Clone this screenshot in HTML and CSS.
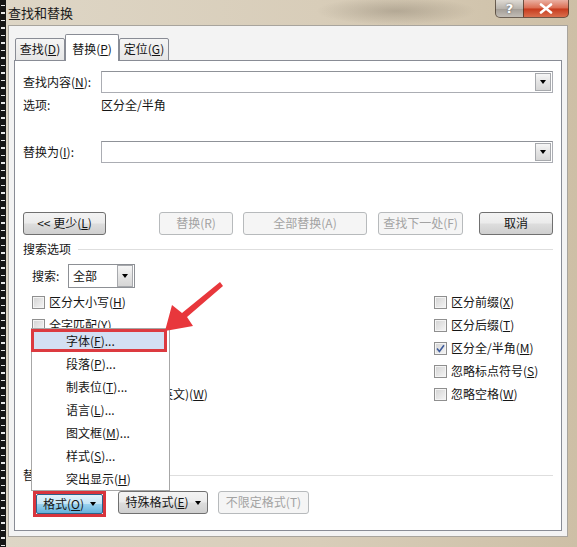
FILE: index.html
```html
<!DOCTYPE html>
<html lang="zh-CN">
<head>
<meta charset="utf-8">
<title>查找和替换</title>
<link rel="stylesheet" href="styles.css">
</head>
<body>
<div class="screen">
  <div class="strip"></div>
  <div class="window">
    <div class="titlebar">
      <span class="title">查找和替换</span>
      <div class="caption">
        <span class="cap help">?</span>
        <span class="cap close">
          <svg width="14" height="11" viewBox="0 0 14 11"><path d="M2 1.5 L12 9.5 M12 1.5 L2 9.5" stroke="#fff" stroke-width="2.6" stroke-linecap="round"/></svg>
        </span>
      </div>
    </div>
    <div class="client">
      <div class="tabs">
        <span class="tab">查找(<u>D</u>)</span>
        <span class="tab active">替换(<u>P</u>)</span>
        <span class="tab">定位(<u>G</u>)</span>
      </div>
      <div class="panel">
        <div class="field">
          <span class="field-label">查找内容(<u>N</u>):</span>
          <div class="combo"><span class="drop"><i class="tri"></i></span></div>
        </div>
        <div class="field options">
          <span class="field-label">选项:</span>
          <span>区分全/半角</span>
        </div>
        <div class="field replace">
          <span class="field-label">替换为(<u>I</u>):</span>
          <div class="combo"><span class="drop"><i class="tri"></i></span></div>
        </div>
        <div class="actions">
          <button class="btn w-less">&lt;&lt; 更少(<u>L</u>)</button>
          <button class="btn disabled w-replace">替换(R)</button>
          <button class="btn disabled w-all">全部替换(A)</button>
          <button class="btn disabled w-next">查找下一处(F)</button>
          <button class="btn w-cancel">取消</button>
        </div>
        <div class="group-head"><span>搜索选项</span><i class="rule"></i></div>
        <div class="search-row">
          <span class="search-label">搜索:</span>
          <div class="select"><span class="select-value">全部</span><span class="drop"><i class="tri"></i></span></div>
        </div>
        <div class="checks">
          <label class="check"><span class="box"></span>区分大小写(<u>H</u>)</label>
          <label class="check"><span class="box"></span>区分前缀(<u>X</u>)</label>
          <label class="check"><span class="box"></span>全字匹配(<u>Y</u>)</label>
          <label class="check"><span class="box"></span>区分后缀(<u>T</u>)</label>
          <label class="check"><span class="box"></span>使用通配符(<u>U</u>)</label>
          <label class="check"><span class="box checked"><svg width="9" height="9" viewBox="0 0 9 9"><path d="M1 4.6 L3.4 7.4 L8 1.2" fill="none" stroke="#3d5a9a" stroke-width="1.6"/></svg></span>区分全/半角(<u>M</u>)</label>
          <label class="check"><span class="box"></span>同音(英文)(<u>K</u>)</label>
          <label class="check"><span class="box"></span>忽略标点符号(<u>S</u>)</label>
          <label class="check"><span class="box"></span>查找单词的所有形式(英文)(<u>W</u>)</label>
          <label class="check"><span class="box"></span>忽略空格(<u>W</u>)</label>
        </div>
        <div class="group-head bottom"><span>替换</span><i class="rule"></i></div>
        <div class="format-row">
          <span class="pressed-wrap"><button class="btn pressed">格式(<u>O</u>)<i class="caret"></i></button></span>
          <button class="btn w-special">特殊格式(<u>E</u>)<i class="caret"></i></button>
          <button class="btn disabled w-nofmt">不限定格式(T)</button>
        </div>
      </div>
    </div>
  </div>

  <div class="menu">
    <div class="menu-item hot">字体(<u>F</u>)...</div>
    <div class="menu-item">段落(<u>P</u>)...</div>
    <div class="menu-item">制表位(<u>T</u>)...</div>
    <div class="menu-item">语言(<u>L</u>)...</div>
    <div class="menu-item">图文框(<u>M</u>)...</div>
    <div class="menu-item">样式(<u>S</u>)...</div>
    <div class="menu-item">突出显示(<u>H</u>)</div>
  </div>

  <svg class="pointer" width="577" height="547" viewBox="0 0 577 547">
    <polygon points="165,331 172,305 182,313 220,282 223,286 187,317 193,326" fill="#e8373c"/>
  </svg>
</div>
</body>
</html>
```

FILE: styles.css
```css
* { box-sizing: border-box; }

html, body {
  margin: 0;
  padding: 0;
}

body {
  width: 577px;
  height: 547px;
  overflow: hidden;
  font: 12px/1.2 "Noto Sans CJK SC", "Microsoft YaHei", sans-serif;
  color: #151515;
  background: #d3c7b1;
}

u { text-underline-offset: 1px; }

.screen {
  position: relative;
  display: flex;
  height: 547px;
}

/* dark film edge on the left */
.strip {
  flex: none;
  width: 6px;
  background-color: #161616;
  background-image: repeating-linear-gradient(to bottom, transparent 0 5px, #e6e6e6 5px 6.5px, transparent 6.5px 7.5px);
  background-size: 4px 100%;
  background-position: 1px 0;
  background-repeat: no-repeat;
}

/* window frame */
.window {
  flex: 1;
  display: flex;
  flex-direction: column;
  background:
    radial-gradient(ellipse 80px 14px at 390px 11px, rgba(110, 100, 85, 0.32), transparent),
    linear-gradient(90deg, #ded6c6, #d8cdb9 55%, #cdbfa6);
}

.titlebar {
  flex: none;
  height: 25px;
  display: flex;
  justify-content: space-between;
  align-items: flex-start;
  padding: 0 8px 0 2px;
}

.title {
  font-size: 13px;
  line-height: 25px;
  color: #1a1a1a;
}

.caption { display: flex; }

.cap {
  height: 18px;
  display: flex;
  align-items: center;
  justify-content: center;
  color: #fff;
  font: bold 13px "DejaVu Sans", sans-serif;
  border: 1px solid rgba(70, 55, 40, 0.75);
  border-top: none;
}

.help {
  width: 28px;
  border-right: none;
  border-radius: 0 0 0 5px;
  background: linear-gradient(#dedad3, #b9b4ad 50%, #a29c95 51%, #c2bdb6);
  text-shadow: 0 0 2px #555;
}

.close {
  width: 46px;
  border-radius: 0 0 5px 0;
  background: linear-gradient(#eab0a2, #db6c51 48%, #c63a1d 52%, #da6e4d);
}

.client {
  flex: 1;
  display: flex;
  flex-direction: column;
  margin: 0 9px 10px 2px;
  padding: 8px 5px 5px 5px;
  background: #f3f3f3;
  border: 1px solid #a8a49d;
}

/* tabs */
.tabs {
  display: flex;
  align-items: flex-end;
  height: 27px;
  margin-bottom: -1px;
  padding-left: 1px;
  position: relative;
  z-index: 1;
}

.tab {
  width: 50px;
  height: 23px;
  display: flex;
  align-items: center;
  justify-content: center;
  padding-bottom: 1px;
  border: 1px solid #898c95;
  border-radius: 2px 2px 0 0;
  background: linear-gradient(#f5f5f5, #e6e6e6);
}

.tab.active {
  width: 54px;
  height: 27px;
  padding-top: 3px;
  border-bottom: none;
  background: #fff;
}

.panel {
  flex: 1;
  display: flex;
  flex-direction: column;
  padding: 10px 8px 0 8px;
  background: #fff;
  border: 1px solid #898c95;
}

.field {
  display: flex;
  align-items: center;
  height: 22px;
}

.field.options { margin-top: 1px; }
.field.replace { margin-top: 25px; }

.field-label {
  flex: none;
  width: 78px;
}

.combo {
  flex: 1;
  height: 22px;
  display: flex;
  justify-content: flex-end;
  align-items: center;
  padding-right: 1px;
  background: #fff;
  border: 1px solid #abadb3;
  border-top-color: #8f9298;
}

.drop {
  width: 16px;
  height: 18px;
  display: flex;
  align-items: center;
  justify-content: center;
  border: 1px solid #a7a9ad;
  background: linear-gradient(#f6f6f6, #e4e4e4 50%, #d6d6d6);
}

.tri {
  width: 0;
  height: 0;
  border-left: 3.5px solid transparent;
  border-right: 3.5px solid transparent;
  border-top: 4px solid #000;
}

/* buttons */
.btn {
  font: inherit;
  color: #151515;
  height: 23px;
  padding: 0;
  display: inline-flex;
  align-items: center;
  justify-content: center;
  border: 1px solid #707070;
  border-radius: 3px;
  background: linear-gradient(#f3f3f3, #ebebeb 48%, #dddddd 52%, #cfcfcf);
}

.btn.disabled {
  color: #a3a3a3;
  border-color: #b7babc;
  background: #f5f5f5;
}

.actions {
  display: flex;
  margin-top: 49px;
}

.w-less { width: 83px; }
.w-replace { width: 74px; margin-left: 53px; }
.w-all { width: 124px; margin-left: 10px; }
.w-next { width: 85px; margin-left: 11px; }
.w-cancel { width: 74px; margin-left: 16px; }

.group-head {
  display: flex;
  align-items: center;
  height: 16px;
  margin-top: 6px;
}

.group-head.bottom { margin-top: 61px; }

.rule {
  flex: 1;
  height: 1px;
  margin-left: 7px;
  background: #dedede;
}

.search-row {
  display: flex;
  align-items: center;
  height: 24px;
  margin-top: 7px;
  padding-left: 9px;
}

.search-label { width: 36px; }

.select {
  width: 67px;
  height: 24px;
  display: flex;
  align-items: center;
  justify-content: space-between;
  padding: 0 1px 0 4px;
  border: 1px solid #8d9095;
  background: #fff;
}

.select .drop { height: 22px; }

/* check boxes, two columns */
.checks {
  display: grid;
  grid-template-columns: 402px 1fr;
  grid-auto-rows: 23px;
  margin-top: 3px;
  padding-left: 9px;
}

.check {
  display: flex;
  align-items: center;
  white-space: nowrap;
}

.box {
  flex: none;
  width: 13px;
  height: 13px;
  margin-right: 4px;
  display: flex;
  align-items: center;
  justify-content: center;
  border: 1px solid #8f8f8f;
  background: linear-gradient(135deg, #d2d2d2, #f6f6f6);
  box-shadow: inset 0 0 0 1px #f4f4f4;
}

.format-row {
  display: flex;
  align-items: flex-start;
  margin-top: 8px;
  padding-left: 10px;
}

.pressed-wrap {
  display: flex;
  width: 73px;
  height: 26px;
  border: 3px solid #d8353d;
}

.btn.pressed {
  flex: 1;
  height: 20px;
  border-color: #2c628b;
  border-radius: 2px;
  background: linear-gradient(#e3f3fb, #c4e5f6 48%, #98d1ef 52%, #66b1da);
}

.w-special { width: 90px; margin-left: 12px; }
.w-nofmt { width: 91px; margin-left: 10px; }

.caret {
  width: 0;
  height: 0;
  margin-left: 6px;
  border-left: 3.5px solid transparent;
  border-right: 3.5px solid transparent;
  border-top: 4px solid #000;
}

/* drop-down menu of the format button */
.menu {
  position: absolute;
  left: 31px;
  top: 328px;
  width: 139px;
  border: 1px solid #a7a7a7;
  background: #fff;
  z-index: 3;
}

.menu-item {
  position: relative;
  height: 23px;
  line-height: 23px;
  padding-left: 34px;
}

.menu-item.hot {
  margin-right: 2px;
  background: #d3e0f3;
}

.menu-item.hot::after {
  content: "";
  position: absolute;
  left: -1px;
  top: 0;
  right: 0;
  bottom: 0;
  border: 3px solid #dc3a40;
}

.pointer {
  position: absolute;
  left: 0;
  top: 0;
  z-index: 4;
  pointer-events: none;
}
```
